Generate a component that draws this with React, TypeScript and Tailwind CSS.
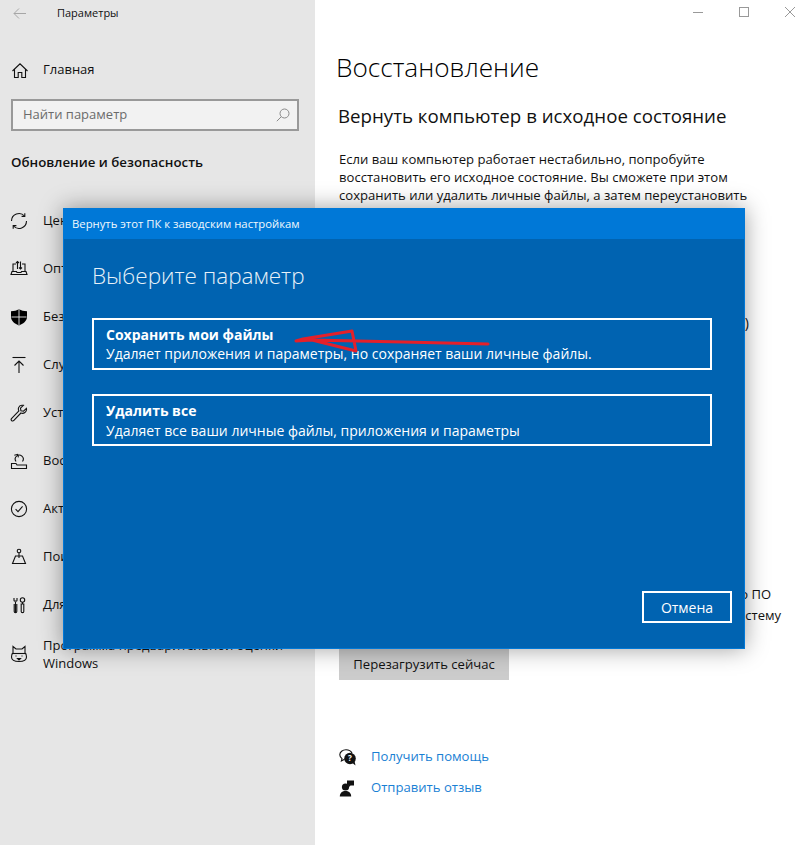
const font = "font-['Open_Sans','Noto_Sans',sans-serif]";

function NavIcon({ children }: { children: React.ReactNode }) {
  return (
    <svg width="18" height="18" viewBox="0 0 18 18" fill="none" stroke="#111" strokeWidth="1.1" className="shrink-0">
      {children}
    </svg>
  );
}

const navItems: { label: string; icon: React.ReactNode }[] = [
  {
    label: "Центр обновления Windows",
    icon: (
      <NavIcon>
        <path d="M1.5 9A7.5 7.5 0 0 1 14.5 4" />
        <path d="M14.8 1.2V4.4H11.6" />
        <path d="M16.5 9A7.5 7.5 0 0 1 3.5 14" />
        <path d="M3.2 16.8V13.6H6.4" />
      </NavIcon>
    ),
  },
  {
    label: "Оптимизация доставки",
    icon: (
      <NavIcon>
        <path d="M3 11V4H6M12 4H15V11" />
        <path d="M1 14.5H17L16 11.5H11.5L11 12.5H7L6.5 11.5H2L1 14.5Z" />
        <path d="M7.5 9V1.5M6 3L7.5 1.5L9 3M10.5 1.5V9M9 7.5L10.5 9L12 7.5" />
      </NavIcon>
    ),
  },
  {
    label: "Безопасность Windows",
    icon: (
      <svg width="18" height="18" viewBox="0 0 18 18" className="shrink-0">
        <path d="M9 1C7 2.6 4 3.2 1 3.2V9C1 13 5 16 9 17.4C13 16 17 13 17 9V3.2C14 3.2 11 2.6 9 1Z" fill="#000" />
        <path d="M9 1V17.2M1.5 9H16.5" stroke="#e6e6e6" strokeWidth="0.9" />
      </svg>
    ),
  },
  {
    label: "Служба архивации",
    icon: (
      <NavIcon>
        <path d="M2.5 1.5H15.5" />
        <path d="M9 17V5M4.5 9.5L9 5L13.5 9.5" />
      </NavIcon>
    ),
  },
  {
    label: "Устранение неполадок",
    icon: (
      <NavIcon>
        <path d="M16.4 4.4L13.5 7.2L10.9 6.8L10.5 4.2L13.4 1.4C11.4 .9 9.2 1.8 8.6 3.6C8.2 4.8 8.3 6 8.9 7L1.7 14.4C.9 15.2 1 16 1.6 16.6C2.2 17.2 3.2 17.2 3.9 16.4L10.9 9C12.2 9.6 13.7 9.4 14.9 8.5C16.2 7.5 16.8 5.9 16.4 4.4Z" />
      </NavIcon>
    ),
  },
  {
    label: "Восстановление",
    icon: (
      <NavIcon>
        <path d="M1.5 16.5V11.5H6L7 13H16.5V16.5H1.5Z" />
        <path d="M6 9.5A4 4 0 1 1 12.5 9.5" />
        <path d="M4.6 2.8H8V6" transform="rotate(-15 6 4)" />
      </NavIcon>
    ),
  },
  {
    label: "Активация",
    icon: (
      <NavIcon>
        <circle cx="9" cy="9" r="7.6" />
        <path d="M5.6 9.2L8 11.6L12.6 6.4" />
      </NavIcon>
    ),
  },
  {
    label: "Поиск устройства",
    icon: (
      <NavIcon>
        <circle cx="9" cy="3" r="1.8" />
        <path d="M9 4.8V10" />
        <path d="M5.5 8H12.5L15.5 15.5H2.5L5.5 8Z" />
      </NavIcon>
    ),
  },
  {
    label: "Для разработчиков",
    icon: (
      <NavIcon>
        <path d="M4 2V4.5C4 5.5 7 5.5 7 4.5V2M5.5 6V16.5M4.2 8V15.5C4.2 17 6.8 17 6.8 15.5V8" />
        <circle cx="12.5" cy="4" r="2.2" />
        <path d="M11.2 8V15.5C11.2 17 13.8 17 13.8 15.5V8H11.2ZM12.5 6V8" />
      </NavIcon>
    ),
  },
];

function Dialog() {
  return (
    <div className="absolute left-[63px] top-[208px] flex h-[441px] w-[682px] flex-col border border-[#0078d7] bg-[#0063b1] text-white shadow-[0_0_22px_rgba(0,0,0,0.38)]">
      <div className="flex h-[30px] shrink-0 items-center bg-[#0078d7] pl-[8px] text-[11.3px] leading-[16px] text-[#f2f8fd]">
        Вернуть этот ПК к заводским настройкам
      </div>
      <div className="flex flex-1 flex-col pl-[28px] pr-[12px]">
        <h2 className="mt-[21px] text-[22.5px] font-light leading-[32px] text-[#e8f1f8]">Выберите параметр</h2>
        <div className="mt-[26px] flex h-[52px] w-[620px] flex-col justify-center border-2 border-white pl-[12px] text-[14px] leading-[19px]">
          <div className="font-bold">Сохранить мои файлы</div>
          <div>Удаляет приложения и параметры, но сохраняет ваши личные файлы.</div>
        </div>
        <div className="mt-[24px] flex h-[52px] w-[620px] flex-col justify-center border-2 border-white pl-[12px] pt-[1px] text-[14px] leading-[20px]">
          <div className="font-bold">Удалить все</div>
          <div>Удаляет все ваши личные файлы, приложения и параметры</div>
        </div>
        <div className="mt-[145px] flex justify-end">
          <div className="flex h-[32px] w-[90px] items-center justify-center border-2 border-white text-[14px]">Отмена</div>
        </div>
      </div>
    </div>
  );
}

export default function App() {
  return (
    <div className={`relative flex h-[845px] w-[810px] overflow-hidden bg-white text-[#111] ${font}`}>
      <aside className="flex w-[315px] shrink-0 flex-col bg-[#e6e6e6]">
        <div className="flex h-[26px] items-center pl-[13px]">
          <svg width="13" height="11" viewBox="0 0 13 11" fill="none" stroke="#a6a6a6" strokeWidth="1">
            <path d="M13 5.5H1M6 .5L1 5.5L6 10.5" />
          </svg>
          <span className="ml-[31px] text-[11px] leading-[16px]">Параметры</span>
        </div>
        <div className="mt-[32px] flex h-[24px] items-center pl-[12px] text-[13px]">
          <svg width="16" height="15" viewBox="0 0 16 15" fill="none" stroke="#111" strokeWidth="1.1" className="shrink-0">
            <path d="M.5 8L8 .8L15.5 8M2.5 6.5V14.5H6.2V9.5H9.8V14.5H13.5V6.5" />
          </svg>
          <span className="ml-[15px]">Главная</span>
        </div>
        <div className="ml-[11px] mt-[17px] flex h-[32px] w-[288px] items-center justify-between border-2 border-[#999] bg-[#f2f2f2] pl-[10px] pr-[7px] text-[13px] text-[#6b6b6b]">
          <span>Найти параметр</span>
          <svg width="14" height="14" viewBox="0 0 14 14" fill="none" stroke="#8a8a8a" strokeWidth="1">
            <circle cx="8.5" cy="5.5" r="4.5" />
            <path d="M5.2 8.8L.8 13.2" />
          </svg>
        </div>
        <div className="ml-[11px] mt-[21px] text-[13.3px] font-semibold leading-[20px]">Обновление и безопасность</div>
        <div className="mt-[25px] flex flex-col">
          {navItems.map((n) => (
            <div key={n.label} className="flex h-[48px] items-center pl-[10px] text-[13px]">
              {n.icon}
              <span className="ml-[15px] whitespace-nowrap">{n.label}</span>
            </div>
          ))}
          <div className="flex h-[48px] items-center pl-[10px] pt-[1px] text-[13px] leading-[18px]">
            <svg width="18" height="18" viewBox="0 0 18 18" fill="none" stroke="#111" strokeWidth="1.1" className="shrink-0">
              <path d="M3 1.5L6 4H12L15 1.5V8C16.5 9 16.5 10.5 16.5 12C16.5 15 14 16.5 9 16.5C4 16.5 1.5 15 1.5 12C1.5 10.5 1.5 9 3 8V1.5Z" />
              <path d="M1.8 8.5H16.2" />
              <path d="M6 11.5V10.5M12 11.5V10.5M7.5 13.5H10.5L9 15Z" />
            </svg>
            <span className="ml-[15px] whitespace-nowrap">
              Программа предварительной оценки
              <br />
              Windows
            </span>
          </div>
        </div>
      </aside>

      <main className="flex min-w-0 flex-1 flex-col pl-[22px]">
        <div className="flex h-[24px] items-center justify-end pr-[15px]">
          <div className="flex items-center gap-[36px]">
            <div className="h-[1px] w-[10px] bg-[#999]" />
            <div className="h-[10px] w-[10px] border border-[#999]" />
            <svg width="10" height="10" viewBox="0 0 10 10" stroke="#999" strokeWidth="1">
              <path d="M0 0L10 10M10 0L0 10" />
            </svg>
          </div>
        </div>
        <h1 className="-ml-[1px] mt-[23px] text-[26.2px] font-light leading-[40px] text-black">Восстановление</h1>
        <h2 className="ml-[1px] mt-[16px] text-[18.7px] leading-[26px]">Вернуть компьютер в исходное состояние</h2>
        <p className="ml-[2px] mt-[21px] w-[440px] text-[13.1px] leading-[18px]">
          Если ваш компьютер работает нестабильно, попробуйте
          <br />
          восстановить его исходное состояние. Вы сможете при этом
          <br />
          сохранить или удалить личные файлы, а затем переустановить
        </p>
        <div className="mt-[109px] flex w-[412px] justify-end text-[14px] leading-[20px]">)</div>
        <div className="mt-[251px] flex w-[444px] flex-col items-end text-[13px] leading-[21px]">
          <span className="pr-[10px]">о ПО</span>
          <span>систему</span>
        </div>
        <div className="ml-[2px] mt-[22px] flex h-[32px] w-[170px] items-center justify-center bg-[#cccccc] pt-[1px] text-[13.1px]">
          Перезагрузить сейчас
        </div>
        <div className="ml-[2px] mt-[65px] flex h-[24px] items-center text-[13.1px] text-[#1a7fd4]">
          <svg width="18" height="17" viewBox="0 0 18 17" className="shrink-0">
            <path d="M7 .8C3.5.8.8 3 .8 5.8C.8 7.5 1.8 8.8 3 9.6L2.4 12L5.6 10.3" fill="none" stroke="#111" strokeWidth="1.1" />
            <path d="M7 .8C9.5.8 12 2 13 4" fill="none" stroke="#111" strokeWidth="1.1" />
            <circle cx="11" cy="9.5" r="5.8" fill="#111" />
            <path d="M13.5 14L16.5 16.5L15.6 12.5Z" fill="#111" />
            <text x="11" y="12.2" fontSize="8" fontWeight="700" textAnchor="middle" fill="#fff">?</text>
          </svg>
          <span className="ml-[14px]">Получить помощь</span>
        </div>
        <div className="ml-[2px] mt-[7px] flex h-[24px] items-center text-[13.1px] text-[#1a7fd4]">
          <svg width="18" height="17" viewBox="0 0 18 17" className="shrink-0">
            <circle cx="6.5" cy="7" r="3.6" fill="#111" />
            <path d="M.8 16.5C.8 12.8 3.4 11 6.5 11S12.2 12.8 12.2 16.5Z" fill="#111" />
            <path d="M8 .5H15V5.5H11.5L9.5 7.5V5.5H8Z" fill="#111" />
          </svg>
          <span className="ml-[14px]">Отправить отзыв</span>
        </div>
      </main>

      <Dialog />

      <svg className="pointer-events-none absolute left-[290px] top-[325px]" width="205" height="32" viewBox="290 325 205 32" fill="none" stroke="#e4202a" strokeWidth="3" strokeLinejoin="round" strokeLinecap="round">
        <path d="M488 344L403 342L312 340L296 341L303 339L352 331L356 351L312 340" />
      </svg>
    </div>
  );
}
